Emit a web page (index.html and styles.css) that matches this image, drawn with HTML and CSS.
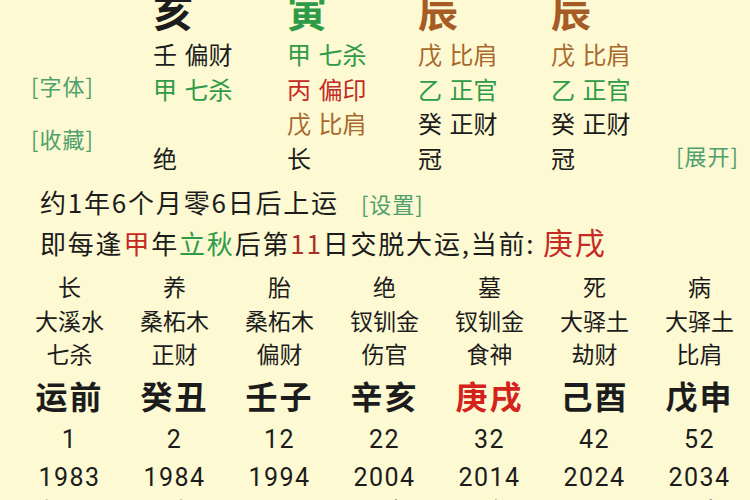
FILE: index.html
```html
<!DOCTYPE html>
<html lang="zh-CN">
<head>
<meta charset="utf-8">
<title>排盘</title>
<link rel="stylesheet" href="styles.css">
</head>
<body>
<div class="chart">
  <div class="side">
    <span class="link">[字体]</span>
    <span class="link">[收藏]</span>
  </div>
  <div class="pillar">
    <div class="zhi black">亥</div>
    <div class="cg black">壬 偏财</div>
    <div class="cg green">甲 七杀</div>
    <div class="cg"></div>
    <div class="cg black">绝</div>
  </div>
  <div class="pillar">
    <div class="zhi green">寅</div>
    <div class="cg green">甲 七杀</div>
    <div class="cg red">丙 偏印</div>
    <div class="cg brown">戊 比肩</div>
    <div class="cg black">长</div>
  </div>
  <div class="pillar">
    <div class="zhi brown2">辰</div>
    <div class="cg brown">戊 比肩</div>
    <div class="cg green">乙 正官</div>
    <div class="cg black">癸 正财</div>
    <div class="cg black">冠</div>
  </div>
  <div class="pillar">
    <div class="zhi brown2">辰</div>
    <div class="cg brown">戊 比肩</div>
    <div class="cg green">乙 正官</div>
    <div class="cg black">癸 正财</div>
    <div class="cg black">冠</div>
  </div>
  <div class="side-r">
    <span class="link">[展开]</span>
  </div>
</div>

<div class="info">
  <p class="line1">约1年6个月零6日后上运<span class="link set">[设置]</span></p>
  <p class="line2">即每逢<span class="red">甲</span>年<span class="green">立秋</span>后第<span class="dred">11</span>日交脱大运,当前: <span class="cur">庚戌</span></p>
</div>

<div class="dayun">
  <div class="step"><span class="r1">长</span><span class="r2">大溪水</span><span class="r3">七杀</span><span class="gz">运前</span><span class="num">1</span><span class="num num2">1983</span><span class="r7">小　运</span></div>
  <div class="step"><span class="r1">养</span><span class="r2">桑柘木</span><span class="r3">正财</span><span class="gz">癸丑</span><span class="num">2</span><span class="num num2">1984</span><span class="r7">丙午</span></div>
  <div class="step"><span class="r1">胎</span><span class="r2">桑柘木</span><span class="r3">偏财</span><span class="gz">壬子</span><span class="num">12</span><span class="num num2">1994</span><span class="r7">丙辰</span></div>
  <div class="step"><span class="r1">绝</span><span class="r2">钗钏金</span><span class="r3">伤官</span><span class="gz">辛亥</span><span class="num">22</span><span class="num num2">2004</span><span class="r7">甲申</span></div>
  <div class="step"><span class="r1">墓</span><span class="r2">钗钏金</span><span class="r3">食神</span><span class="gz cur-gz">庚戌</span><span class="num">32</span><span class="num num2">2014</span><span class="r7">甲午</span></div>
  <div class="step"><span class="r1">死</span><span class="r2">大驿土</span><span class="r3">劫财</span><span class="gz">己酉</span><span class="num">42</span><span class="num num2">2024</span><span class="r7">甲辰</span></div>
  <div class="step"><span class="r1">病</span><span class="r2">大驿土</span><span class="r3">比肩</span><span class="gz">戊申</span><span class="num">52</span><span class="num num2">2034</span><span class="r7">甲寅</span></div>
</div>
</body>
</html>
```

FILE: styles.css
```css
html, body {
  margin: 0;
  padding: 0;
}
body {
  background: #fcf9d3;
  color: #1c1c1c;
  font-family: "Noto Sans CJK SC", "Noto Sans", sans-serif;
  overflow: hidden;
  width: 750px;
  height: 500px;
}
.black { color: #1c1c1c; }
.green { color: #2f9a48; }
.red { color: #c42a24; }
.brown { color: #a8692e; }
.brown2 { color: #a65c24; }
.dred { color: #a8302a; }

.link {
  color: #4fa06c;
  font-size: 22px;
  letter-spacing: 1px;
}

.chart {
  display: grid;
  grid-template-columns: 153px 134px 131px 133px 125px auto;
  margin-top: -16px;
}
.side {
  display: flex;
  flex-direction: column;
  align-items: flex-start;
  padding: 86px 0 0 31px;
}
.side .link {
  line-height: 30px;
}
.side .link + .link {
  margin-top: 23px;
}
.side-r {
  align-self: end;
  line-height: 34.5px;
}
.pillar {
  display: flex;
  flex-direction: column;
}
.zhi {
  font-size: 40px;
  font-weight: 700;
  line-height: 53px;
}
.cg {
  font-size: 24px;
  line-height: 34.5px;
  height: 34.5px;
  white-space: nowrap;
  word-spacing: 2px;
}

.info {
  padding-left: 40px;
  margin-top: 8px;
}
.info p {
  margin: 0;
  font-size: 26px;
  letter-spacing: 1.8px;
  white-space: nowrap;
  line-height: 38px;
}
.line1 .set {
  margin-left: 22px;
  letter-spacing: 1px;
}
.line2 .cur {
  color: #c62a24;
  font-size: 30px;
}

.dayun {
  display: grid;
  grid-template-columns: repeat(7, 105px);
  padding-left: 17px;
  margin-top: 7px;
}
.step {
  display: flex;
  flex-direction: column;
  align-items: center;
  font-size: 23px;
  white-space: nowrap;
}
.r1, .r2 { line-height: 34px; }
.r3 { line-height: 33px; }
.gz {
  font-size: 32px;
  font-weight: 700;
  letter-spacing: 2px;
  line-height: 50px;
}
.cur-gz { color: #d4231d; }
.num {
  font-family: Roboto, "Noto Sans", sans-serif;
  font-size: 25px;
  letter-spacing: 1.5px;
  line-height: 40px;
}
.num2 { line-height: 35px; }
.r7 { line-height: 28px; }
```
